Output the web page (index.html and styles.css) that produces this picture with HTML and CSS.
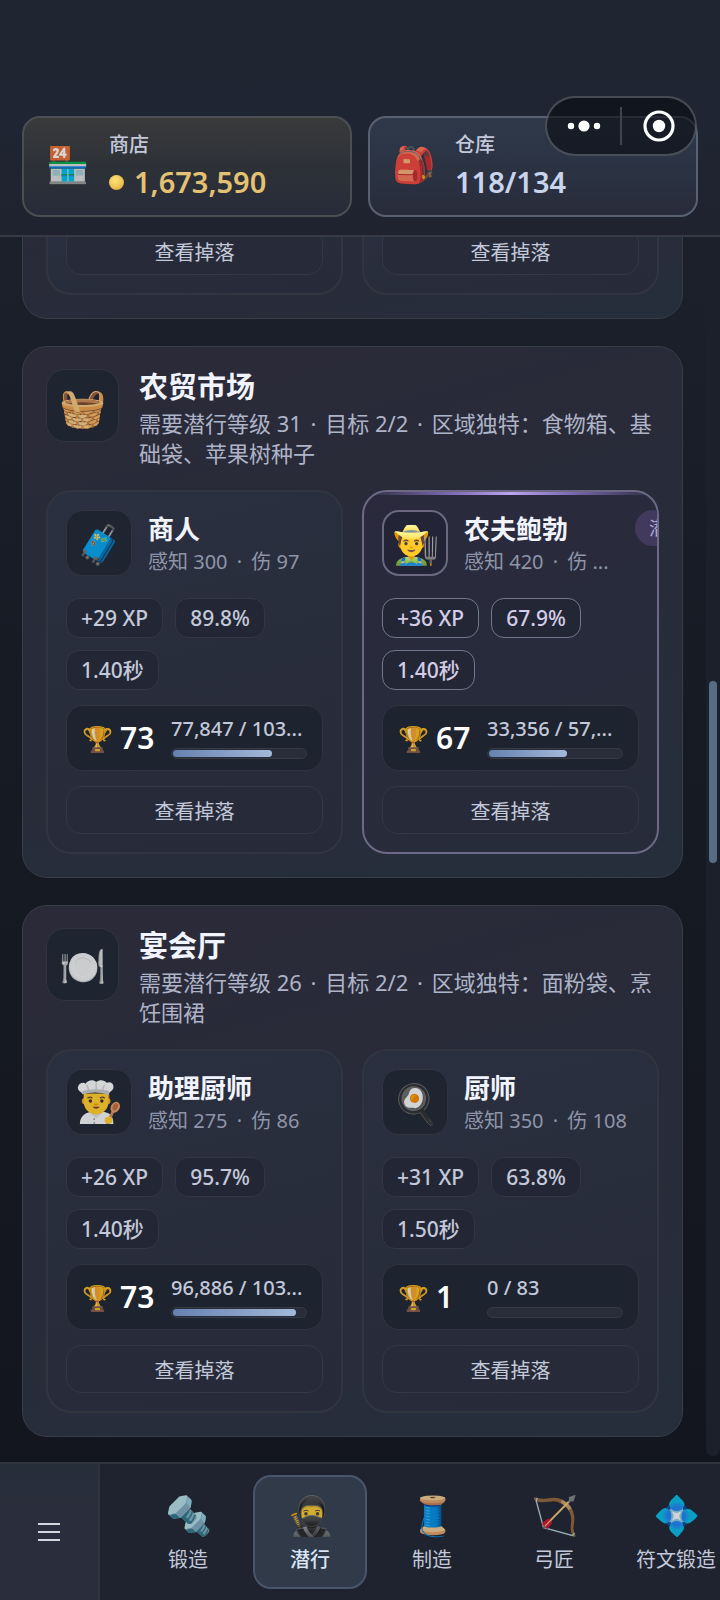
FILE: index.html
```html
<!DOCTYPE html>
<html lang="zh-CN">
<head>
<meta charset="utf-8">
<meta name="viewport" content="width=device-width, initial-scale=1">
<title>潜行</title>
<link rel="stylesheet" href="styles.css">
</head>
<body>
<div class="app">
  <header class="topbar">
    <button class="stat stat-shop" type="button">
      <span class="stat-icon">🏪</span>
      <span class="stat-text">
        <span class="stat-label">商店</span>
        <span class="stat-value"><i class="coin"></i>1,673,590</span>
      </span>
    </button>
    <button class="stat stat-bag" type="button">
      <span class="stat-icon">🎒</span>
      <span class="stat-text">
        <span class="stat-label">仓库</span>
        <span class="stat-value">118/134</span>
      </span>
    </button>
    <div class="capsule">
      <button type="button" aria-label="更多">
        <svg width="34" height="14" viewBox="0 0 34 14"><circle cx="4" cy="7" r="3.2"/><circle cx="17" cy="7" r="5.6"/><circle cx="30" cy="7" r="3.2"/></svg>
      </button>
      <span class="capsule-line"></span>
      <button type="button" aria-label="关闭">
        <svg width="32" height="32" viewBox="0 0 32 32"><circle cx="16" cy="16" r="14" fill="none" stroke="#fff" stroke-width="3.2"/><circle cx="16" cy="16" r="6.2"/></svg>
      </button>
    </div>
  </header>

  <main class="main">
    <div class="list">
      <section class="area">
        <div class="tiles">
          <article class="tile"><button class="drops" type="button">查看掉落</button></article>
          <article class="tile"><button class="drops" type="button">查看掉落</button></article>
        </div>
      </section>

      <section class="area">
        <div class="area-head">
          <span class="area-icon">🧺</span>
          <div class="area-text">
            <h2>农贸市场</h2>
            <p>需要潜行等级 31 <i class="sep">·</i> 目标 2/2 <i class="sep">·</i> 区域独特：食物箱、基础袋、苹果树种子</p>
          </div>
        </div>
        <div class="tiles">
          <article class="tile">
            <div class="tile-head">
              <span class="tile-icon">🧳</span>
              <div class="tile-text"><h3>商人</h3><p>感知 300 <i class="sep">·</i> 伤 97</p></div>
            </div>
            <div class="chips"><span>+29 XP</span><span>89.8%</span><span>1.40秒</span></div>
            <div class="mastery">
              <span class="trophy">🏆</span><strong>73</strong>
              <div class="progress"><span>77,847 / 103...</span><div class="bar"><i style="width:75%"></i></div></div>
            </div>
            <button class="drops" type="button">查看掉落</button>
          </article>
          <article class="tile active">
            <div class="tile-head">
              <span class="tile-icon">👨‍🌾</span>
              <div class="tile-text"><h3>农夫鲍勃</h3><p>感知 420 <i class="sep">·</i> 伤 ...</p></div>
              <span class="badge">潜行中</span>
            </div>
            <div class="chips"><span>+36 XP</span><span>67.9%</span><span>1.40秒</span></div>
            <div class="mastery">
              <span class="trophy">🏆</span><strong>67</strong>
              <div class="progress"><span>33,356 / 57,...</span><div class="bar"><i style="width:59%"></i></div></div>
            </div>
            <button class="drops" type="button">查看掉落</button>
          </article>
        </div>
      </section>

      <section class="area">
        <div class="area-head">
          <span class="area-icon">🍽️</span>
          <div class="area-text">
            <h2>宴会厅</h2>
            <p>需要潜行等级 26 <i class="sep">·</i> 目标 2/2 <i class="sep">·</i> 区域独特：面粉袋、烹饪围裙</p>
          </div>
        </div>
        <div class="tiles">
          <article class="tile">
            <div class="tile-head">
              <span class="tile-icon">
                <svg width="44" height="44" viewBox="0 0 46 46" opacity=".85">
                  <path d="M3 46c0-8 5-12 14-13h9c8 1 12 4 12 13z" fill="#f1f1f1"/>
                  <path d="M13 34l7 6 7-6-2-3H15z" fill="#d9d9d9"/>
                  <path d="M7 15h2v9H7zM32 15h2v9h-2z" fill="#a2581f"/>
                  <ellipse cx="7" cy="22" rx="2" ry="3" fill="#e8a82a"/><ellipse cx="33" cy="22" rx="2" ry="3" fill="#e8a82a"/>
                  <path d="M7 14h26v9c0 7-6 13-13 13S7 30 7 23z" fill="#ffca28"/>
                  <path d="M6 15C4 12 0 11 1 7c1-4 6-5 8-3 2-4 8-5 11-2 4-3 9-2 11 1 4-2 8 1 7 5 0 3-4 4-5 7-7-3-20-3-27 0z" fill="#f4f4f4"/>
                  <path d="M6 15l-1-3c8-3 22-3 29 0l-1 4c-8-4-19-4-27-1z" fill="#c4c7c8"/>
                  <path d="M10 5c2 2 2 4 2 6M20 3v8M29 5c-2 2-2 4-2 6" fill="none" stroke="#c4c7c8" stroke-width="1.2"/>
                  <path d="M11 19q3-2 5 0M24 19q3-2 5 0" fill="none" stroke="#6d4c41" stroke-width="1.6"/>
                  <circle cx="14" cy="22" r="1.8" fill="#3b2a25"/><circle cx="26" cy="22" r="1.8" fill="#3b2a25"/>
                  <path d="M18 25q2 1.600 4 0" fill="none" stroke="#e59600" stroke-width="1.6"/>
                  <path d="M16 28q4 4 8 0z" fill="#783a2f"/>
                  <circle cx="18" cy="41" r="1" fill="#999"/><circle cx="18" cy="45" r="1" fill="#999"/>
                  <path d="M38 32l-6 13" stroke="#d98550" stroke-width="3" stroke-linecap="round"/>
                  <ellipse cx="40" cy="28.500" rx="4.600" ry="6" transform="rotate(28 40 28.500)" fill="#e59a63"/>
                  <ellipse cx="40" cy="28" rx="2.600" ry="4" transform="rotate(28 40 28)" fill="#bd6c40"/>
                  <ellipse cx="33" cy="42" rx="4" ry="3.600" fill="#ffca28"/>
                </svg>
              </span>
              <div class="tile-text"><h3>助理厨师</h3><p>感知 275 <i class="sep">·</i> 伤 86</p></div>
            </div>
            <div class="chips"><span>+26 XP</span><span>95.7%</span><span>1.40秒</span></div>
            <div class="mastery">
              <span class="trophy">🏆</span><strong>73</strong>
              <div class="progress"><span>96,886 / 103...</span><div class="bar"><i style="width:93%"></i></div></div>
            </div>
            <button class="drops" type="button">查看掉落</button>
          </article>
          <article class="tile">
            <div class="tile-head">
              <span class="tile-icon">🍳</span>
              <div class="tile-text"><h3>厨师</h3><p>感知 350 <i class="sep">·</i> 伤 108</p></div>
            </div>
            <div class="chips"><span>+31 XP</span><span>63.8%</span><span>1.50秒</span></div>
            <div class="mastery">
              <span class="trophy">🏆</span><strong>1</strong>
              <div class="progress"><span>0 / 83</span><div class="bar"><i style="width:0%"></i></div></div>
            </div>
            <button class="drops" type="button">查看掉落</button>
          </article>
        </div>
      </section>
    </div>
    <div class="track"><i class="thumb"></i></div>
  </main>

  <nav class="nav">
    <button class="menu" type="button" aria-label="菜单"><i></i><i></i><i></i></button>
    <div class="tabs">
      <button class="tab" type="button"><span>🔩</span>锻造</button>
      <button class="tab current" type="button"><span>🥷</span>潜行</button>
      <button class="tab" type="button"><span>🧵</span>制造</button>
      <button class="tab" type="button"><span>🏹</span>弓匠</button>
      <button class="tab" type="button"><span>💠</span>符文锻造</button>
    </div>
  </nav>
</div>
</body>
</html>
```
FILE: styles.css
```css
* { box-sizing: border-box; }

body {
  margin: 0;
  background: #14171f;
  color: #c3c9da;
  font-family: "Noto Sans", "Noto Sans CJK SC", sans-serif;
  font-size: 20px;
}

button {
  margin: 0;
  padding: 0;
  border: 0;
  background: none;
  color: inherit;
  font: inherit;
}

h2, h3, p { margin: 0; }

.app {
  display: flex;
  flex-direction: column;
  height: 100vh;
}

/* top bar */
.topbar {
  position: relative;
  flex: none;
  display: grid;
  grid-template-columns: 1fr 1fr;
  gap: 16px;
  padding: 116px 22px 18px;
  border-bottom: 2px solid #363a44;
  background: linear-gradient(#1f2631, #1f2532 50%, #20232f);
}

.stat {
  display: flex;
  align-items: center;
  gap: 20px;
  height: 101px;
  padding: 0 22px;
  border: 2px solid #4b4e52;
  border-radius: 18px;
  text-align: left;
}

.stat-shop { background: linear-gradient(#3a3a3b, #2d3137 50%, #272c3a); }
.stat-bag {
  border-color: #596272;
  background: linear-gradient(#2f394a, #2b3343 50%, #282c3a);
}

.stat-icon {
  width: 43px;
  padding-bottom: 6px;
  font-size: 35px;
  line-height: 40px;
  opacity: .8;
}

.stat-text { display: flex; flex-direction: column; gap: 1px; }
.stat-label { line-height: 30px; font-weight: 500; }
.stat-value {
  display: flex;
  align-items: center;
  gap: 10px;
  font-size: 29px;
  line-height: 42px;
  font-weight: 600;
  color: #c9d5ec;
}
.stat-shop .stat-value { color: #e5c273; }

.coin {
  width: 15px;
  height: 15px;
  border-radius: 50%;
  background: radial-gradient(circle at 40% 35%, #ffe27a, #ecc050 60%, #c98f2c);
}

.capsule {
  position: absolute;
  top: 96px;
  right: 23px;
  display: grid;
  grid-template-columns: 1fr 2px 1fr;
  align-items: center;
  width: 152px;
  height: 60px;
  border: 2px solid rgba(150, 155, 165, .4);
  border-radius: 30px;
  background: rgba(10, 12, 17, .62);
  color: #fff;
}
.capsule button { display: grid; place-items: center; height: 100%; }
.capsule svg { display: block; fill: #fff; }
.capsule-line { height: 38px; background: #41444b; }

/* scrolling list */
.main {
  flex: 1;
  display: flex;
  min-height: 0;
  overflow: hidden;
  background: linear-gradient(#1b202b, #161a23 45%, #14161f);
}

.list {
  flex: 1;
  min-width: 0;
  display: flex;
  flex-direction: column;
  justify-content: flex-end;
  gap: 27px;
  padding: 0 23px 25px 22px;
}

.area {
  flex: none;
  padding: 22px 23px 23px;
  border: 1px solid #383d48;
  border-radius: 25px;
  background: linear-gradient(165deg, #2b2a39, #282b39 45%, #262e3b);
}

.area-head {
  display: flex;
  align-items: flex-start;
  gap: 20px;
  margin-bottom: 20px;
}

.sep {
  margin: 0 3px;
  font-style: normal;
}

.area-icon, .tile-icon {
  flex: none;
  display: grid;
  place-items: center;
  border: 1px solid #30343f;
  background: #1e2430;
  line-height: 1;
  color: rgba(255, 255, 255, .8);
}
.area-icon {
  width: 73px;
  height: 73px;
  border-radius: 19px;
  font-size: 38px;
}
.tile-icon {
  width: 66px;
  height: 66px;
  border-radius: 17px;
  font-size: 38px;
}

.area-text { min-width: 0; }
.area-text h2 {
  margin-bottom: 3px;
  font-size: 29px;
  line-height: 36px;
  font-weight: 600;
  color: #f1f4fc;
}
.area-text p {
  padding-bottom: 2px;
  font-size: 22px;
  line-height: 30px;
  color: #aeb4c8;
}

.tiles {
  display: grid;
  grid-template-columns: 1fr 1fr;
  gap: 19px;
}

.tile {
  position: relative;
  display: flex;
  flex-direction: column;
  gap: 15px;
  min-width: 0;
  padding: 18px;
  border: 2px solid #31353f;
  border-radius: 25px;
  background: linear-gradient(165deg, #2a3040, #282d3b 50%, #272b39);
  overflow: hidden;
}

.tile-head {
  display: flex;
  align-items: center;
  gap: 16px;
  margin-bottom: 7px;
}
.tile-text { flex: 1 1 0; min-width: 0; }
.tile-text h3 {
  font-size: 26px;
  line-height: 36px;
  font-weight: 600;
  color: #f1f4fc;
}
.tile-text p {
  white-space: nowrap;
  line-height: 29px;
  color: #8e95a9;
}
.tile-text .sep { margin: 0 4px; }

.chips { display: flex; flex-wrap: wrap; gap: 12px; }
.chips span {
  padding: 0 14px;
  border: 1px solid #333743;
  border-radius: 13px;
  background: #232735;
  font-size: 21px;
  line-height: 38px;
  font-weight: 500;
}

.mastery {
  display: flex;
  align-items: center;
  height: 66px;
  padding: 0 15px;
  border: 1px solid #303440;
  border-radius: 17px;
  background: #1e2330;
}
.trophy {
  width: 38px;
  font-size: 25px;
  line-height: 1;
  color: rgba(255, 255, 255, .8);
}
.mastery strong {
  width: 51px;
  font-size: 30px;
  line-height: 40px;
  font-weight: 600;
  color: #fff;
}
.progress { flex: 1; min-width: 0; }
.progress span {
  display: block;
  white-space: nowrap;
  font-size: 20px;
  line-height: 24px;
  font-weight: 500;
}
.bar {
  height: 11px;
  margin-top: 7px;
  padding: 1px;
  border: 1px solid #353a44;
  border-radius: 6px;
  background: #282d39;
}
.bar i {
  display: block;
  height: 100%;
  border-radius: 4px;
  background: linear-gradient(90deg, #6581b0, #a4b9d9);
}

.drops {
  height: 48px;
  border: 1px solid #343843;
  border-radius: 15px;
  background: #272b39;
}

.tile.active {
  border-color: #6d6985;
  background: linear-gradient(160deg, #2a2a3c, #282b3b 50%, #262c39);
}
.tile.active::before {
  content: "";
  position: absolute;
  top: 0;
  left: 0;
  right: 0;
  height: 3px;
  background: linear-gradient(90deg, transparent, #7d6bb4 30%, #b9a6ee 50%, #7d6bb4 70%, transparent);
}
.active .tile-icon {
  border: 2px solid #6b6880;
  background: #232536;
  color: #fff;
}
.active .tile-text { flex: none; width: 155px; }
.active .chips span { border-color: #77758c; color: #d3cde8; }
.badge {
  flex: none;
  align-self: flex-start;
  padding: 0 14px;
  border-radius: 18px;
  background: #413a5c;
  color: #b5aad6;
  font-size: 18px;
  line-height: 36px;
}

.track {
  position: relative;
  flex: none;
  width: 14px;
  margin: 8px 0 6px;
  border-radius: 7px;
  background: #1b202a;
}
.thumb {
  position: absolute;
  top: 36%;
  left: 3px;
  width: 8px;
  height: 15%;
  border-radius: 4px;
  background: #596c86;
}

/* bottom navigation */
.nav {
  flex: none;
  display: flex;
  border-top: 2px solid #30343e;
  background: #1e232f;
  overflow: hidden;
}
.menu {
  flex: none;
  display: flex;
  flex-direction: column;
  align-items: center;
  justify-content: center;
  gap: 6px;
  width: 100px;
  border-right: 2px solid #30343e;
  background: linear-gradient(#262e3a, #2a2d3b 40%);
}
.menu i { width: 22px; height: 2px; background: #d3d6df; }

.tabs {
  display: flex;
  gap: 8px;
  padding: 11px 0 11px 31px;
}
.tab {
  flex: none;
  display: flex;
  flex-direction: column;
  align-items: center;
  gap: 10px;
  width: 114px;
  height: 114px;
  padding-top: 15px;
  border: 2px solid transparent;
  border-radius: 18px;
  line-height: 28px;
}
.tab span {
  font-size: 38px;
  line-height: 44px;
  opacity: .8;
}
.tab.current {
  border-color: #48566c;
  background: #303a49;
  color: #d9e4f7;
  font-weight: 500;
}
```
